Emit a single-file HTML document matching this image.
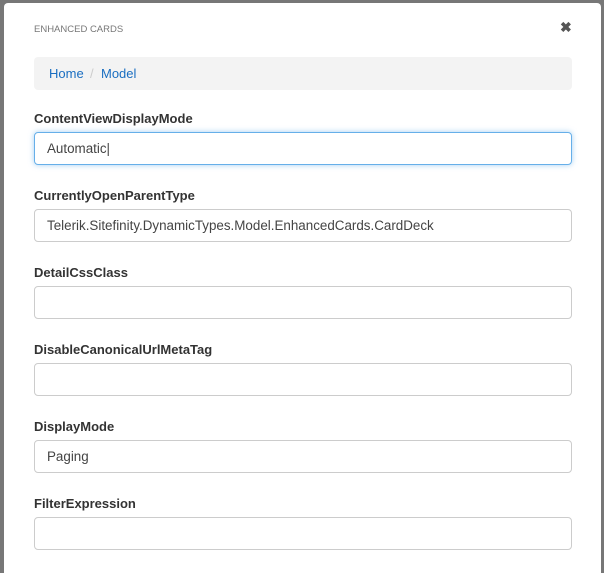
<!DOCTYPE html>
<html><head><style>
html,body{margin:0;padding:0;width:604px;height:565px;overflow:hidden;background:#777;font-family:"Liberation Sans",sans-serif;}
.modal{position:absolute;left:4px;top:3px;width:597px;height:570px;background:#fff;border-radius:4px 4px 0 0;}
.title{position:absolute;left:30px;top:21px;font-size:9.5px;color:#777;}
.close{position:absolute;left:556px;top:16px;font-size:14px;font-weight:bold;color:#555;}
.bc{position:absolute;left:30px;top:54px;width:538px;height:33px;background:#f3f3f3;border-radius:4px;font-size:13px;line-height:33px;color:#1a6ec1;}
.bc span{position:absolute;top:0}
.lbl{position:absolute;left:30px;font-size:13px;font-weight:600;color:#333;}
.inp{position:absolute;left:30px;width:536px;height:31px;border:1px solid #ccc;border-radius:4px;font-size:13.4px;line-height:31px;color:#444;box-sizing:content-box;}
.inp span{position:absolute;left:12px;}
.focus{border-color:#66afe9;box-shadow:0 0 6px rgba(102,175,233,.6);}
</style></head><body>
<div class="modal">
<div class="title">ENHANCED CARDS</div>
<div class="close">✖</div>
<div class="bc"><span style="left:15px">Home</span><span style="left:56px;color:#ccc">/</span><span style="left:67px">Model</span></div>
<div class="lbl" style="top:108px">ContentViewDisplayMode</div>
<div class="inp focus" style="top:129px"><span>Automatic|</span></div>
<div class="lbl" style="top:185px">CurrentlyOpenParentType</div>
<div class="inp" style="top:206px"><span>Telerik.Sitefinity.DynamicTypes.Model.EnhancedCards.CardDeck</span></div>
<div class="lbl" style="top:262px">DetailCssClass</div>
<div class="inp" style="top:283px"></div>
<div class="lbl" style="top:339px">DisableCanonicalUrlMetaTag</div>
<div class="inp" style="top:360px"></div>
<div class="lbl" style="top:416px">DisplayMode</div>
<div class="inp" style="top:437px"><span>Paging</span></div>
<div class="lbl" style="top:493px">FilterExpression</div>
<div class="inp" style="top:514px"></div>
</div>
</body></html>
